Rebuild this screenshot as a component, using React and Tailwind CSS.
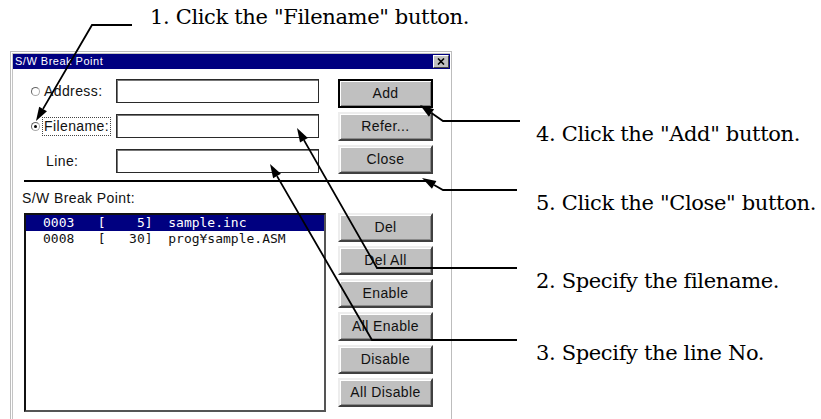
import React from "react";

// arrow = polyline with a filled head on the last point
function Arrow({ pts }) {
  const [x1, y1] = pts[pts.length - 2];
  const [x2, y2] = pts[pts.length - 1];
  const len = Math.hypot(x2 - x1, y2 - y1);
  const ux = (x2 - x1) / len;
  const uy = (y2 - y1) / len;
  const L = 14;
  const W = 4.5;
  const bx = x2 - ux * L;
  const by = y2 - uy * L;
  const head = `${x2},${y2} ${bx - uy * W},${by + ux * W} ${bx + uy * W},${by - ux * W}`;
  const line = [...pts.slice(0, -1), [bx, by]].map((p) => p.join(",")).join(" ");
  return (
    <g>
      <polyline points={line} fill="none" stroke="black" strokeWidth="1.8" />
      <polygon points={head} fill="black" />
    </g>
  );
}

function Btn({ children, main }) {
  return (
    <div
      className={
        main
          ? "h-[29px] flex items-center justify-center bg-[#c0c0c0] border-2 border-black shadow-[inset_1px_1px_0_#fff,inset_-1px_-1px_0_#808080]"
          : "h-[29px] flex items-center justify-center bg-[#c0c0c0] border-2 border-t-[#ededed] border-l-[#ededed] border-r-[#404040] border-b-[#404040] shadow-[inset_1px_1px_0_#fff,inset_-1px_-1px_0_#8a8a8a]"
      }
    >
      {children}
    </div>
  );
}

function Radio({ on }) {
  return (
    <div className="w-[9px] h-[9px] rounded-full border border-[#666] border-r-[#aaa] border-b-[#aaa] bg-white flex items-center justify-center">
      {on && <div className="w-[3px] h-[3px] rounded-full bg-black" />}
    </div>
  );
}

function Field() {
  return <div className="h-[24px] w-[203px] bg-white border border-[#2a2a2a] shadow-[inset_1px_1px_0_#777]" />;
}

function Dialog() {
  return (
    <div className="ml-[10px] w-[442px] h-[380px] shrink-0 border border-[#bdbdbd] p-px">
      <div className="h-full border-l border-t border-[#c4c4c4] flex flex-col font-['Liberation_Sans',Arial,sans-serif] text-[14px] tracking-[0.4px] text-[#111]">
        {/* Title bar */}
        <div className="h-[15px] bg-[#000080] flex items-center justify-between pl-[2px] pr-px">
          <span className="text-white text-[11px] leading-none tracking-[0.5px]">S/W Break Point</span>
          <div className="w-[16px] h-[13px] bg-[#c0c0c0] border border-t-white border-l-white border-r-[#404040] border-b-[#404040] flex items-center justify-center">
            <svg width="8" height="7" viewBox="0 0 8 7">
              <path d="M1 0.5 L7 6.5 M7 0.5 L1 6.5" stroke="black" strokeWidth="1.6" />
            </svg>
          </div>
        </div>

        {/* Address / Filename / Line */}
        <div className="flex pt-[10px]">
          <div className="w-[306px] flex flex-col gap-[11px]">
            <div className="flex items-center h-[24px]">
              <div className="w-[103px] flex items-center gap-[2px] pl-[18px]">
                <Radio />
                <span className="border border-transparent px-px leading-[17px]">Address:</span>
              </div>
              <Field />
            </div>
            <div className="flex items-center h-[24px]">
              <div className="w-[103px] flex items-center gap-[2px] pl-[18px]">
                <Radio on />
                <span className="border border-dotted border-[#444] px-px leading-[17px]">Filename:</span>
              </div>
              <Field />
            </div>
            <div className="flex items-center h-[24px]">
              <div className="w-[103px] pl-[33px]">Line:</div>
              <Field />
            </div>
          </div>
          <div className="ml-[19px] w-[95px] flex flex-col gap-[4px]">
            <Btn main>Add</Btn>
            <Btn>Refer...</Btn>
            <Btn>Close</Btn>
          </div>
        </div>

        <div className="mt-[6px] ml-[11px] mr-[21px] h-[2px] bg-black" />

        <div className="mt-[8px] ml-[9px] h-[16px] leading-[16px]">S/W Break Point:</div>

        {/* Break point list */}
        <div className="mt-[7px] flex items-start">
          <div className="ml-[11px] w-[302px] h-[199px] bg-white border-2 border-t-[#111] border-l-[#111] border-r-[#555] border-b-[#555] font-['DejaVu_Sans_Mono',monospace] text-[13px] tracking-normal">
            <div className="h-[16px] leading-[16px] pl-[17px] bg-[#000080] text-white whitespace-pre">{"0003   [    5]  sample.inc"}</div>
            <div className="h-[16px] leading-[16px] pl-[17px] whitespace-pre">{"0008   [   30]  prog¥sample.ASM"}</div>
          </div>
          <div className="ml-[12px] w-[95px] flex flex-col gap-[4px]">
            <Btn>Del</Btn>
            <Btn>Del All</Btn>
            <Btn>Enable</Btn>
            <Btn>All Enable</Btn>
            <Btn>Disable</Btn>
            <Btn>All Disable</Btn>
          </div>
        </div>
      </div>
    </div>
  );
}

export default function App() {
  return (
    <div className="relative w-[821px] h-[419px] overflow-hidden bg-white text-black">
      <div className="h-[51px] pl-[150px] pt-[5px] font-['DejaVu_Serif',serif] text-[21px] leading-[24px] tracking-[-0.35px] whitespace-nowrap">
        1. Click the "Filename" button.
      </div>
      <div className="flex items-start">
        <Dialog />
        <div className="ml-[84px] flex flex-col font-['DejaVu_Serif',serif] text-[21px] leading-[24px] tracking-[-0.35px] whitespace-nowrap">
          <p className="mt-[71px]">4. Click the "Add" button.</p>
          <p className="mt-[45px]">5. Click the "Close" button.</p>
          <p className="mt-[54px]">2. Specify the filename.</p>
          <p className="mt-[48px]">3. Specify the line No.</p>
        </div>
      </div>

      {/* callout arrows */}
      <svg className="absolute inset-0 pointer-events-none" width="821" height="419">
        <Arrow pts={[[132, 25], [92, 25], [36, 121]]} />
        <Arrow pts={[[520, 121], [443, 121], [420, 105]]} />
        <Arrow pts={[[517, 190], [443, 190], [422, 178]]} />
        <Arrow pts={[[517, 268], [377, 268], [297, 128]]} />
        <Arrow pts={[[517, 340], [372, 340], [270, 164]]} />
      </svg>
    </div>
  );
}
